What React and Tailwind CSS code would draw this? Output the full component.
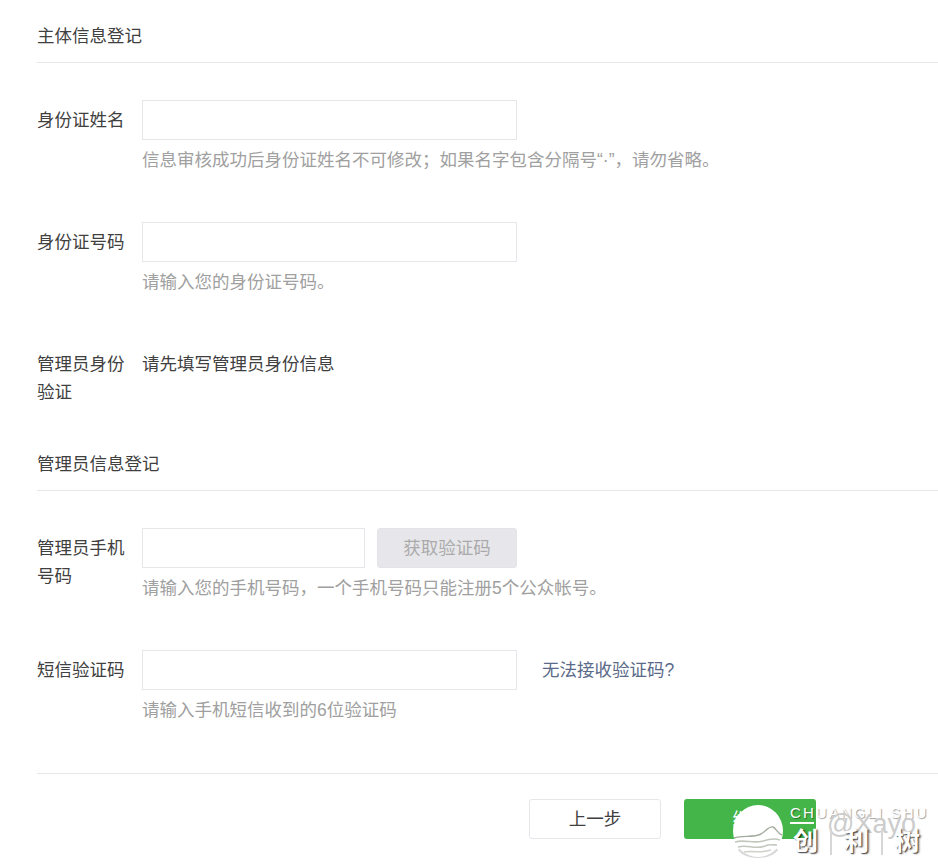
const font = "font-['Liberation_Sans','Noto_Sans_CJK_SC',sans-serif]";

function SectionTitle({ children }) {
  return <h3 className="h-[28px] text-[17.5px] leading-[28px] text-[#404040]">{children}</h3>;
}

function Field({ label, children, hint, className }) {
  return (
    <div className={"flex " + className}>
      <label className="w-[105px] shrink-0 pr-[10px] text-[17.5px] leading-[28px] pt-[6px] text-[#404040]">
        {label}
      </label>
      <div className="flex-1">
        {children}
        {hint && <p className="mt-[6px] text-[17.5px] leading-[28px] text-[#a0a0a0]">{hint}</p>}
      </div>
    </div>
  );
}

function TextInput({ width = "w-[375px]" }) {
  return <input className={width + " block h-[40px] border border-[#e7e7eb] bg-white"} />;
}

export default function App() {
  return (
    <div className={font + " relative h-[866px] w-[938px] overflow-hidden bg-white pl-[37px]"}>
      <div className="border-b border-[#e7e7eb] pt-[22px] pb-[12px]">
        <SectionTitle>主体信息登记</SectionTitle>
      </div>

      <Field label="身份证姓名" className="mt-[37px]" hint="信息审核成功后身份证姓名不可修改；如果名字包含分隔号“·”，请勿省略。">
        <TextInput />
      </Field>

      <Field label="身份证号码" className="mt-[48px]" hint="请输入您的身份证号码。">
        <TextInput />
      </Field>

      <Field label="管理员身份验证" className="mt-[48px]">
        <p className="pt-[6px] text-[17.5px] leading-[28px] text-[#404040]">请先填写管理员身份信息</p>
      </Field>

      <div className="mt-[44px] border-b border-[#e7e7eb] pb-[12px]">
        <SectionTitle>管理员信息登记</SectionTitle>
      </div>

      <Field label="管理员手机号码" className="mt-[37px]" hint="请输入您的手机号码，一个手机号码只能注册5个公众帐号。">
        <div className="flex gap-[12px]">
          <TextInput width="w-[223px]" />
          <button className="h-[40px] w-[140px] rounded-[3px] border border-[#e4e4e8] bg-[#e7e7eb] text-[17.5px] text-[#aaaaaa]">
            获取验证码
          </button>
        </div>
      </Field>

      <Field label="短信验证码" className="mt-[48px]" hint="请输入手机短信收到的6位验证码">
        <div className="flex items-center gap-[25px]">
          <TextInput />
          <a className="text-[17.5px] text-[#5a6a88]">无法接收验证码?</a>
        </div>
      </Field>

      <div className="mt-[49px] flex justify-end gap-[23px] border-t border-[#e7e7eb] pt-[25px] pr-[122px]">
        <button className="h-[40px] w-[132px] rounded-[3px] border border-[#e7e7eb] bg-white text-[17.5px] text-[#404040]">
          上一步
        </button>
        <button className="h-[40px] w-[132px] rounded-[3px] bg-[#44b549] text-[17.5px] text-white">
          继续
        </button>
      </div>

      {/* watermark */}
      <div className="absolute left-[733px] top-[805px] h-[52px] w-[50px]">
        <svg width="50" height="54" viewBox="0 0 50 54">
          <path d="M6 44 C14 54 36 54 44 44" fill="none" stroke="#d8d8d8" strokeWidth="3" />
          <ellipse cx="25" cy="26" rx="25" ry="26" fill="#ffffff" />
          <path d="M1 33 C10 30 20 33 28 29 C33 26 36 21 40 22 C43 23 44 28 49 30" fill="none" stroke="#a3ad9f" strokeWidth="1.4" />
          <path d="M2 37 C12 34 20 39 30 36 C36 34 42 33 47 35" fill="none" stroke="#c2c8be" strokeWidth="1.6" />
          <path d="M5 42 C14 39 22 45 32 41 C36 39 40 40 44 40" fill="none" stroke="#c2c8be" strokeWidth="1.6" />
          <path d="M11 47 C18 45 26 49 38 45" fill="none" stroke="#cfd3cc" strokeWidth="1.6" />
        </svg>
      </div>
      <div className="absolute left-[790px] top-[804px] text-[15px] leading-[17px] tracking-[2.1px] whitespace-nowrap text-white [text-shadow:1px_1px_1px_rgba(0,0,0,0.4)]">
        CHUANGLI SHU
      </div>
      <div className="absolute left-[827px] top-[809px] text-[27px] leading-[30px] whitespace-nowrap text-[#cccccc]">
        @Xayo
      </div>
      <div className="absolute left-[790px] top-[822px] h-[2px] w-[24px] bg-white" />
      <div className="absolute left-[793px] top-[825px] flex w-[127px] items-center justify-between text-[25px] font-bold leading-[32px] text-white [text-shadow:1px_1px_1px_rgba(0,0,0,0.6),2px_1px_2px_rgba(0,0,0,0.35)]">
        <span>创</span>
        <span className="h-[27px] w-[2px] bg-[#d6d6d6]" />
        <span>利</span>
        <span className="h-[27px] w-[2px] bg-[#d6d6d6]" />
        <span>树</span>
      </div>
    </div>
  );
}
